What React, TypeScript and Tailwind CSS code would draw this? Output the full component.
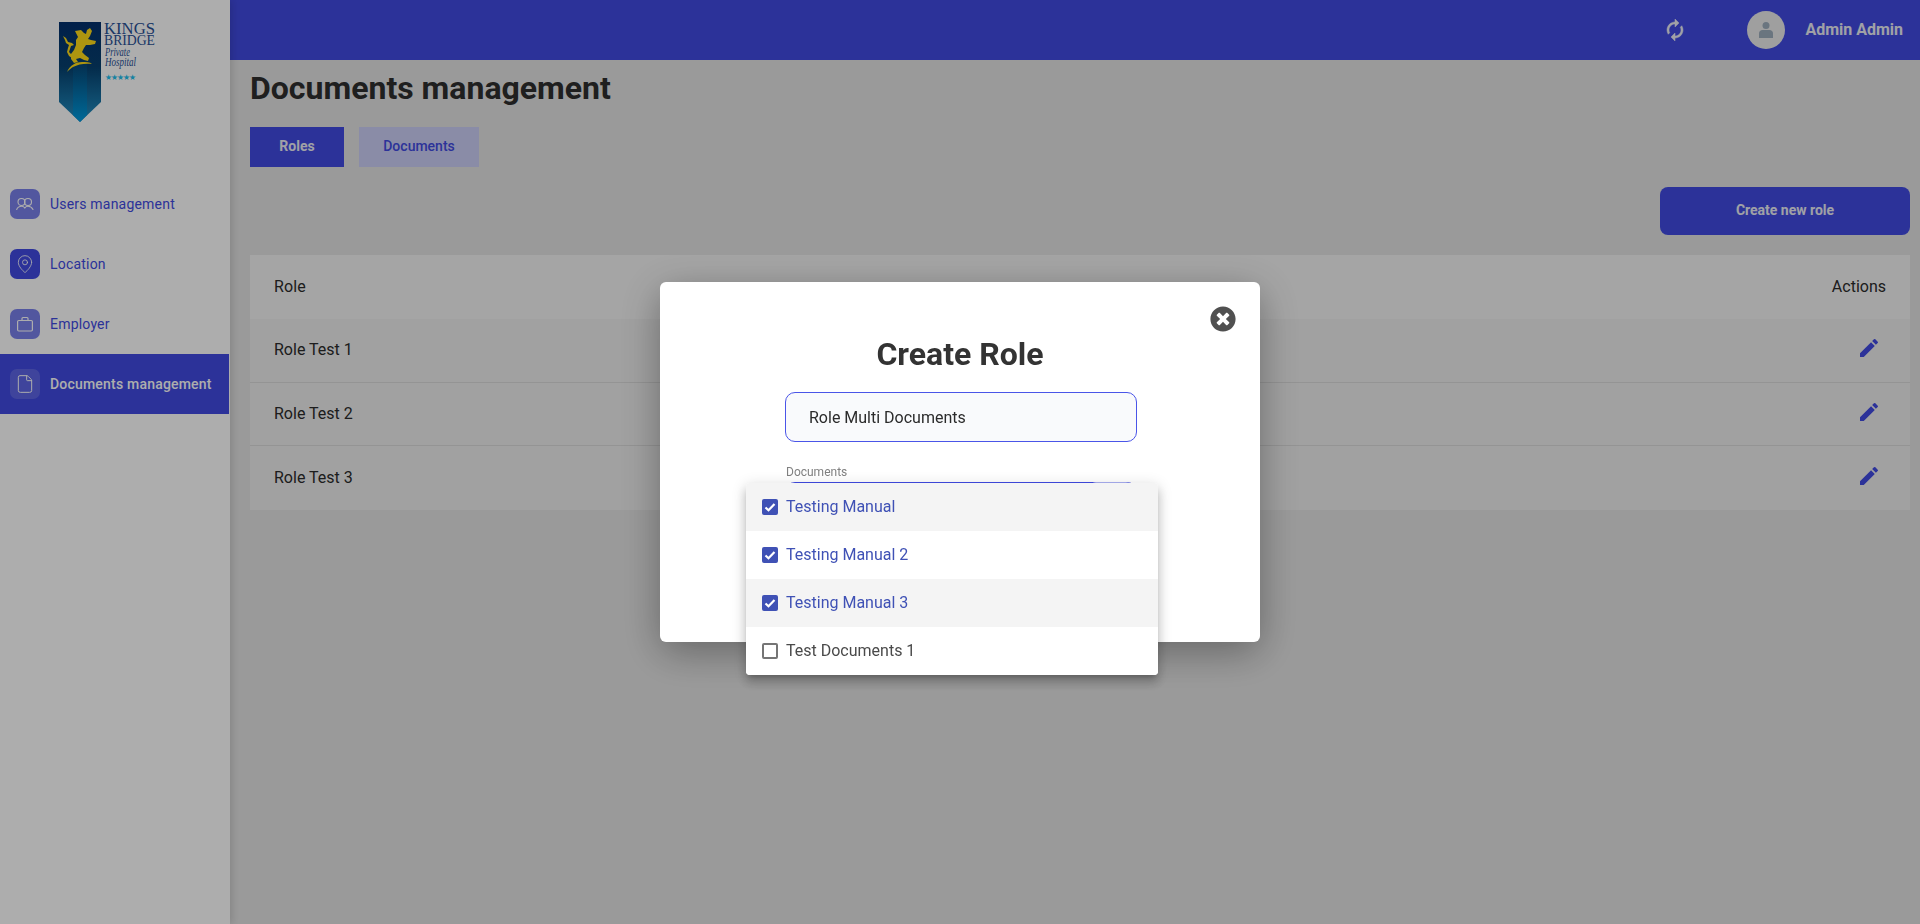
import { File, MapPin } from 'lucide-react';
import { FaTimesCircle } from 'react-icons/fa';
import { MdEdit } from 'react-icons/md';

const roles = ['Role Test 1', 'Role Test 2', 'Role Test 3'];

const documents = [
  { name: 'Testing Manual', checked: true, shaded: true },
  { name: 'Testing Manual 2', checked: true, shaded: false },
  { name: 'Testing Manual 3', checked: true, shaded: true },
  { name: 'Test Documents 1', checked: false, shaded: false },
];

function UsersIcon() {
  return (
    <svg width="20" height="20" viewBox="0 0 20 20" fill="none" stroke="currentColor" strokeWidth="1.1" strokeLinecap="round">
      <circle cx="6.500" cy="8" r="3.500" />
      <circle cx="13" cy="8" r="3.500" />
      <path d="M1.700 15.500C2.500 13.500 4.300 12.300 6.500 12.300 8 12.300 9 12.800 9.800 13.800" />
      <path d="M9.800 13.800C10.600 12.800 11.600 12.300 13 12.300 15.200 12.300 17 13.500 18 15.500" />
    </svg>
  );
}

function CaseIcon() {
  return (
    <svg width="20" height="20" viewBox="0 0 20 20" fill="none" stroke="currentColor" strokeWidth="1.2" strokeLinejoin="round">
      <rect x="2.600" y="6.500" width="14.800" height="10.500" rx="1.200" />
      <path d="M7 6.500V4.500a1 1 0 0 1 1-1h4a1 1 0 0 1 1 1v2" />
    </svg>
  );
}

function SyncIcon() {
  return (
    <svg width="24" height="24" viewBox="0 0 24 24" fill="currentColor" stroke="currentColor" strokeWidth="0.5" className="-scale-x-100">
      <path d="M12 4V1L8 5l4 4V6c3.31 0 6 2.690 6 6 0 1.010-.25 1.970-.7 2.800l1.460 1.460C19.540 15.030 20 13.570 20 12c0-4.420-3.580-8-8-8zm0 14c-3.310 0-6-2.690-6-6 0-1.010.25-1.970.7-2.800L5.240 7.740C4.460 8.970 4 10.430 4 12c0 4.420 3.580 8 8 8v3l4-4-4-4v3z" />
    </svg>
  );
}

function Logo() {
  return (
    <svg width="110" height="110" viewBox="55 18 110 110" className="block">
      <defs>
        <linearGradient id="banner" x1="0" y1="0" x2="0" y2="1">
          <stop offset="0" stopColor="#03306e" />
          <stop offset="0.45" stopColor="#06406f" />
          <stop offset="0.9" stopColor="#1d83b6" />
        </linearGradient>
        <linearGradient id="strip" x1="0" y1="0" x2="0" y2="1">
          <stop offset="0" stopColor="#06406f" />
          <stop offset="1" stopColor="#009ce0" />
        </linearGradient>
      </defs>
      <polygon points="59,22 101,22 101,102 80,122 59,102" fill="url(#banner)" />
      <polygon points="73,60 87,60 87,115 80,122 73,115" fill="url(#strip)" />
      {/* lion */}
      <path
        d="M75 31L81 30L84 33L86 34L87 30L90 28L92 31L90 36L88 39L91 40L96 41L95 44L90 45L86 45L84 48L82 52L85 55L89 58L88 61L84 60L80 58L76 59L78 62L74 63L71 59L71 54L74 50L76 45L76 40L78 37z"
        fill="#ffdc18"
      />
      <path d="M67 72C70 65 76 62 82 62C86 62 90 62 92 64C86 63 78 64 73 67C71 68 69 70 67 72z" fill="#ffdc18" />
      <path d="M63 36L66 38L68 42L72 43L74 45L71 46L70 49L69 52L72 55L72 58L69 56L67 52L68 48L69 45L66 43L65 40z" fill="#ffdc18" />
      <g fill="#285096" fontFamily="Liberation Serif">
        <text x="104" y="34" fontSize="17" textLength="51" lengthAdjust="spacingAndGlyphs">KINGS</text>
        <text x="104" y="45" fontSize="14" textLength="51" lengthAdjust="spacingAndGlyphs">BRIDGE</text>
        <text x="105" y="56" fontStyle="italic" fontSize="12" textLength="25" lengthAdjust="spacingAndGlyphs">Private</text>
        <text x="105" y="65.500" fontStyle="italic" fontSize="12" textLength="31" lengthAdjust="spacingAndGlyphs">Hospital</text>
      </g>
      <text x="105" y="80" fontFamily="DejaVu Sans" fontSize="7.800" textLength="31" fill="#1fc0ee">★★★★★</text>
    </svg>
  );
}

function SideItem({ icon, label, tone, active }: { icon: React.ReactNode; label: string; tone: string; active?: boolean }) {
  return (
    <div className={`flex h-[60px] items-center gap-[10px] pl-[10px] ${active ? 'bg-[#414be2] text-white' : 'text-[#414be2]'}`}>
      <div className={`flex h-[30px] w-[30px] items-center justify-center rounded-[7px] text-white ${tone}`}>{icon}</div>
      <span className={`text-[14px] tracking-[0.2px] ${active ? 'font-medium' : ''}`}>{label}</span>
    </div>
  );
}

export default function App() {
  return (
    <div className="flex h-[924px] overflow-hidden bg-[#e4e4e4] font-['Roboto',sans-serif]">
      {/* Sidebar */}
      <aside className="relative z-10 w-[230px] shrink-0 bg-white pr-px shadow-[2px_0_8px_rgba(0,0,0,0.15)]">
        <div className="h-[189px] pl-[55px] pt-[18px]">
          <Logo />
        </div>
        <div className="-mt-[15px]">
          <SideItem icon={<UsersIcon />} label="Users management" tone="bg-[#414be2]/70" />
          <SideItem icon={<MapPin size={20} strokeWidth={1} />} label="Location" tone="bg-[#414be2]" />
          <SideItem icon={<CaseIcon />} label="Employer" tone="bg-[#414be2]/70" />
          <SideItem icon={<File size={20} strokeWidth={1.2} />} label="Documents management" tone="bg-white/15" active />
        </div>
      </aside>

      {/* Main column */}
      <main className="flex min-w-0 flex-1 flex-col">
        <header className="flex h-[60px] shrink-0 items-center justify-end bg-[#414be2] pr-[17px] text-[#eceef5]">
          <SyncIcon />
          <div className="ml-[60px] flex h-[38px] w-[38px] items-center justify-center rounded-full bg-[#ebebeb]">
            <svg width="20" height="20" viewBox="0 0 20 20" fill="#9dadbc">
              <circle cx="10" cy="5.500" r="3.500" />
              <path d="M3 18v-4.500c0-2 1.500-3.500 3.500-3.500h7c2 0 3.500 1.500 3.500 3.500V18z" />
            </svg>
          </div>
          <span className="ml-5 text-[16px] font-bold">Admin Admin</span>
        </header>

        <div className="pl-5 pr-[10px]">
          <h1 className="mt-[10px] text-[32px] font-bold leading-[36px] text-[#2e2e2e]">Documents management</h1>

          <div className="mt-[21px] flex gap-[15px]">
            <button className="h-10 w-[94px] bg-[#414be2] pb-0.5 text-[14px] font-bold text-[#eceef5]">Roles</button>
            <button className="h-10 w-[120px] bg-[#ccceF7] pb-0.5 text-[14px] font-medium text-[#414be2]">Documents</button>
          </div>

          <div className="mt-5 flex justify-end">
            <button className="h-12 w-[250px] rounded-[8px] bg-[#414be2] pb-0.5 text-[14px] font-bold text-[#eceef5]">Create new role</button>
          </div>

          <div className="mt-5 bg-[#eeeeee] text-[16px] text-[#2b2b2b]">
            <div className="flex h-16 items-center justify-between bg-[#f4f4f4] px-6">
              <span className="tracking-[0.1px]">Role</span>
              <span>Actions</span>
            </div>
            {roles.map((role) => (
              <div key={role} className="flex h-[63.700px] items-center justify-between border-b border-[#dadada] pl-6 pr-[29px] last:border-b-0">
                <span>{role}</span>
                <MdEdit size={24} className="-mt-1 text-[#414be2]" />
              </div>
            ))}
          </div>
        </div>
      </main>

      {/* Dimmed backdrop and dialog */}
      <div className="fixed inset-0 z-20 flex items-center justify-center bg-black/32">
        <div className="relative h-[360px] w-[600px] rounded-[6px] bg-white pt-[52px] shadow-[0_10px_40px_rgba(0,0,0,0.35)]">
          <button className="absolute right-6 top-6 text-[#505050]">
            <FaTimesCircle size={26} />
          </button>
          <h2 className="text-center text-[32px] font-bold leading-10 text-[#333333]">Create Role</h2>

          <div className="ml-[125px] mt-[18px] w-[352px]">
            <div className="flex h-[50px] items-center rounded-[10px] border border-[#4a55e8] bg-[#f9fafc] pl-[23px] pt-0.5 text-[16px] text-[#2b2b2b]">
              Role Multi Documents
            </div>
            <div className="mt-[23px] pl-px text-[12px] leading-[14px] text-[#808080]">Documents</div>
            <div className="relative mt-[3px] h-[50px] rounded-[10px] border border-[#414be2]">
              <div className="absolute -top-px right-[4px] h-3 w-[42px] rounded-t-[6px] bg-[#aab0f2]" />
            </div>
          </div>

          {/* Open select menu */}
          <ul className="absolute left-[86px] top-[201px] z-10 w-[412px] overflow-hidden rounded-[4px] bg-white shadow-[0_5px_5px_-3px_rgba(0,0,0,0.2),0_8px_10px_1px_rgba(0,0,0,0.14),0_3px_14px_2px_rgba(0,0,0,0.12)]">
            {documents.map((doc) => (
              <li
                key={doc.name}
                className={`flex h-12 items-center gap-2 pl-4 text-[16px] ${doc.shaded ? 'bg-[#f4f4f4]' : 'bg-white'} ${doc.checked ? 'text-[#3f51b5]' : 'text-[#4a4a4a]'}`}
              >
                {doc.checked ? (
                  <span className="flex h-4 w-4 items-center justify-center rounded-[2px] bg-[#3f51b5] text-white">
                    <svg width="16" height="16" viewBox="0 0 16 16" fill="none" stroke="currentColor" strokeWidth="2.200">
                      <path d="M3.500 8.500L6.500 11.300L12.500 5" />
                    </svg>
                  </span>
                ) : (
                  <span className="h-4 w-4 rounded-[2px] border-2 border-[#757575]" />
                )}
                {doc.name}
              </li>
            ))}
          </ul>
        </div>
      </div>
    </div>
  );
}
